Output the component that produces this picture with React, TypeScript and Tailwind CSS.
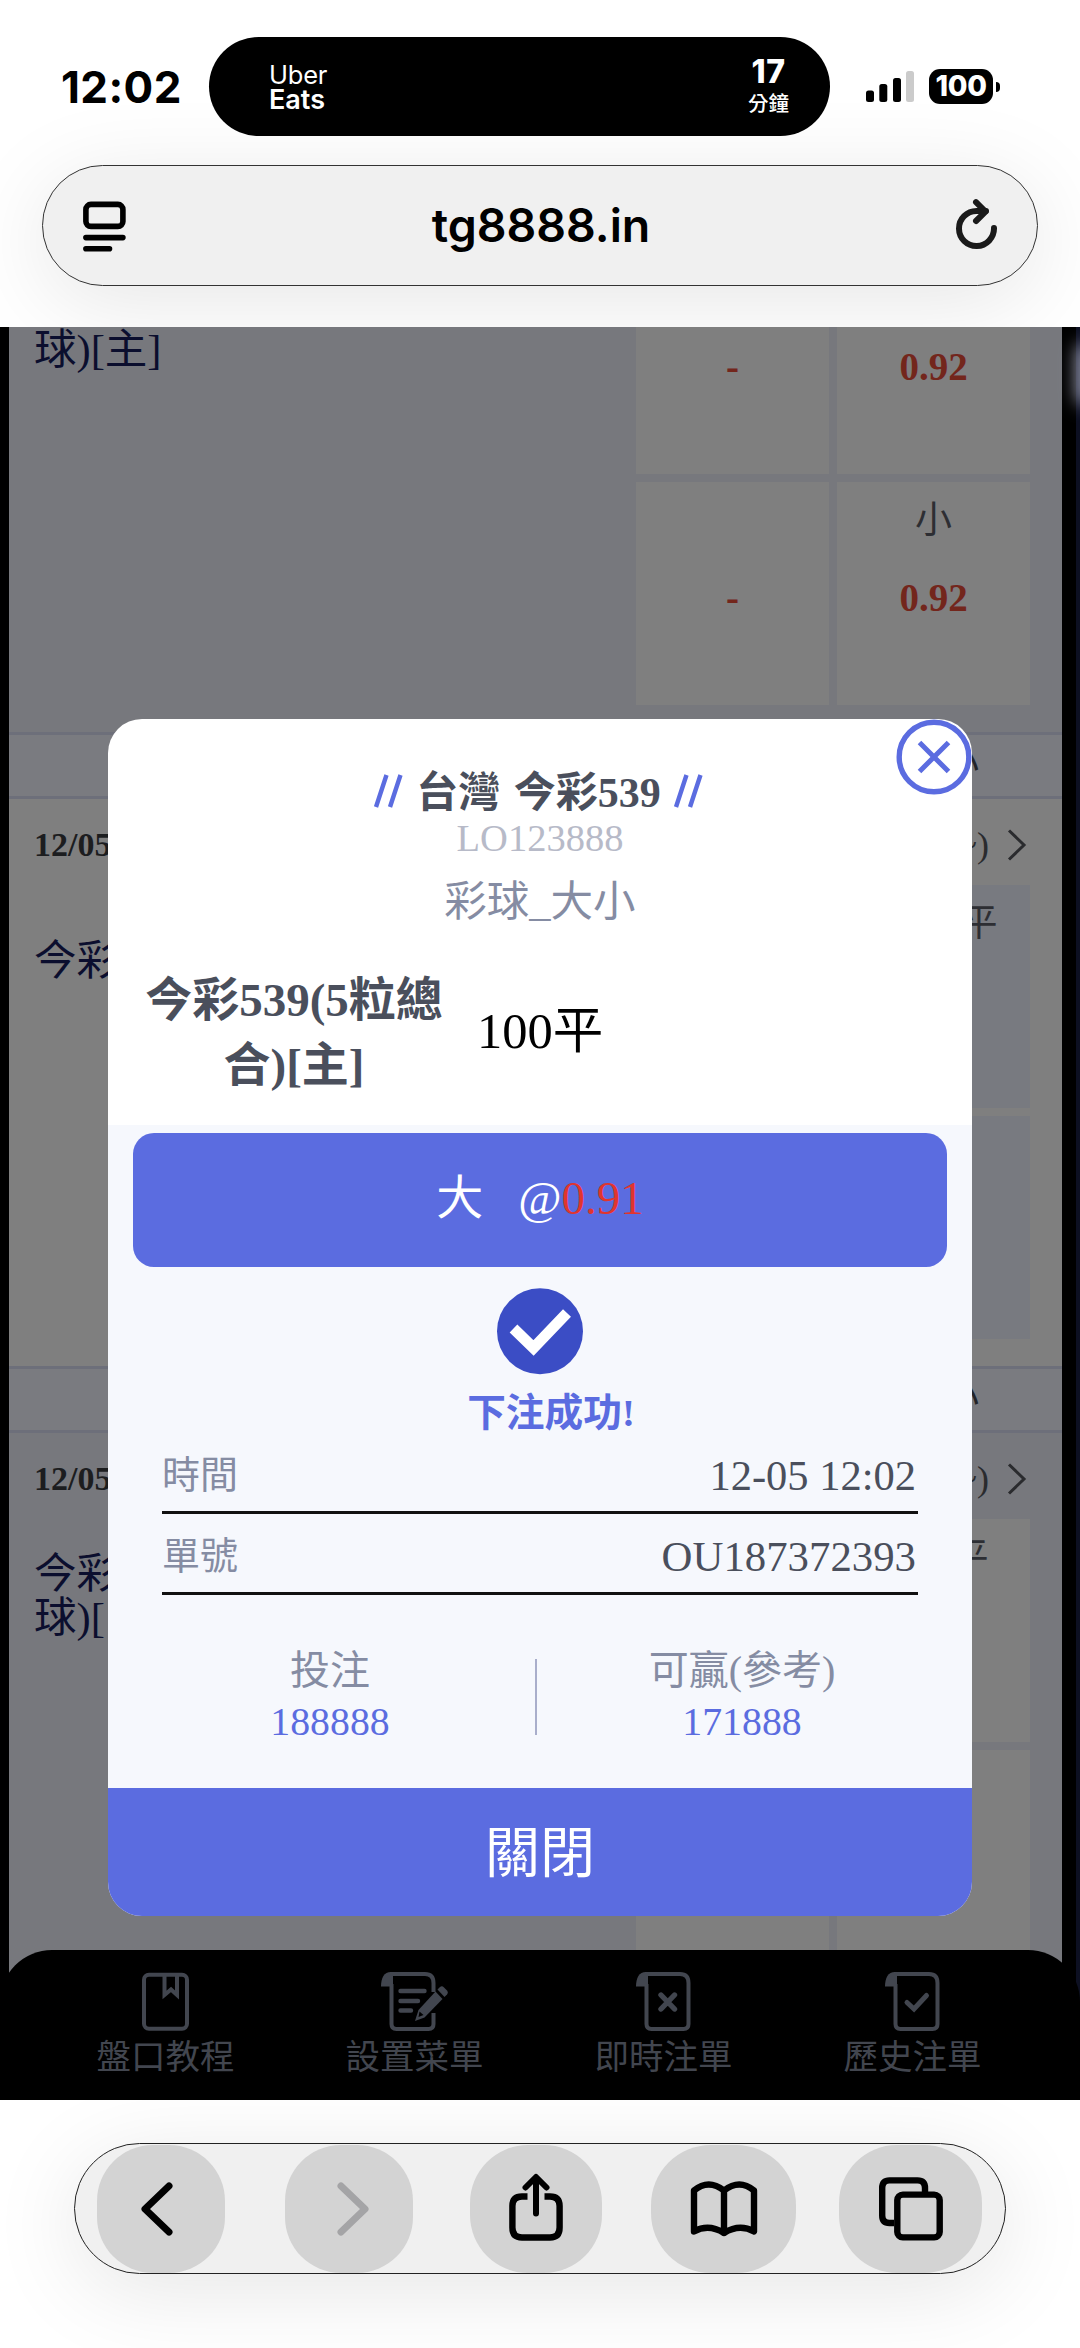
import React from "react";
import clsx from "clsx";

const StatusBar: React.FC = () => (
  <div className="flex items-center h-[99px] mt-[37px] font-['Inter','Noto_Sans_CJK_TC',sans-serif]">
    <span className="w-[148px] ml-[61px] text-[44px] leading-none font-bold tracking-[0.4px] text-black">12:02</span>

    <div className="flex items-center justify-between w-[621px] h-[99px] rounded-[50px] bg-black text-white pl-[60px] pr-[41px]">
      <div className="flex flex-col leading-[25px] pt-px">
        <span className="text-[25.5px] tracking-[-0.2px]">Uber</span>
        <span className="text-[27px] font-semibold">Eats</span>
      </div>
      <div className="flex flex-col items-center pb-px">
        <span className="text-[32px] leading-[36px] font-extrabold tracking-[0.5px]">17</span>
        <span className="text-[20.5px] leading-[28px] font-medium">分鐘</span>
      </div>
    </div>

    <svg className="ml-[36px]" width="48" height="32" viewBox="0 0 48 32">
      <rect x="0" y="19.5" width="8" height="11.5" rx="2.5" />
      <rect x="13.3" y="13" width="8" height="18" rx="2.5" />
      <rect x="27" y="7" width="8" height="24" rx="2.5" />
      <rect x="40" y="0" width="8" height="31" rx="2.5" fill="#cbcbcb" />
    </svg>
    <div className="flex items-center ml-[15px]">
      <div className="flex items-center justify-center w-[64px] h-[35px] rounded-[11px] bg-black text-white text-[28.5px] leading-none font-extrabold tracking-[-0.3px]">
        100
      </div>
      <div className="w-[4px] h-[10px] ml-[3px] rounded-r-full bg-black" />
    </div>
  </div>
);

const AddressBar: React.FC = () => (
  <div className="flex items-center justify-between h-[121px] mt-[29px] mx-[42px] pl-[40px] pr-[39px] rounded-full border-[1.5px] border-[#333] bg-[#f0f0f0] shadow-[0_16px_90px_rgba(0,0,0,0.1)]">
    <svg width="43" height="52" viewBox="0 0 43 52" fill="none" stroke="#000" strokeWidth="5.6" strokeLinecap="round">
      <rect x="2.9" y="4.4" width="37" height="22" rx="5" />
      <path d="M2.9 37.6H39.9M2.9 48.8H26.5" />
    </svg>
    <span className="text-[46.5px] leading-none font-semibold text-black font-['Inter',sans-serif] pb-px">
      tg8888.in
    </span>
    <svg
      className="mb-[3px]"
      width="42"
      height="52"
      viewBox="0 0 42 52"
      fill="none"
      stroke="#1a1a1a"
      strokeWidth="6"
      strokeLinecap="round"
      strokeLinejoin="round"
    >
      <path d="M38 30A17.5 17.5 0 1 1 20.5 13H30" />
      <path d="M20 4.2L29.5 13.6L20 23" />
    </svg>
  </div>
);

interface OddsCellProps {
  label?: string;
  odds?: string;
  tall?: boolean;
  className?: string;
}

const OddsCell: React.FC<OddsCellProps> = ({ label, odds, tall = true, className }) => (
  <div className={clsx("flex flex-col items-center w-[193px]", tall ? "h-[223px] pt-[17px]" : "h-[147px] pt-[18px]", className)}>
    {tall && <span className="h-[44px] mb-[33px] text-[37px] leading-[44px] text-[#2d2e33]">{label}</span>}
    <span className="text-[39px] leading-[44px] font-bold text-[#73261c]">{odds}</span>
  </div>
);

const Band: React.FC = () => (
  <div className="flex justify-end items-center h-[67px] border-y-[3px] border-[#6d6f7a] bg-[#7a7b80] pr-[83px] pb-[5px]">
    <span className="text-[36px] leading-none text-[#232428]">小</span>
  </div>
);

const MatchHeader: React.FC = () => (
  <div className="flex items-center justify-between h-[86px] pl-[25px] pr-[35px] pt-[5px]">
    <span className="text-[34px] leading-none font-bold text-[#1c1d1f]">12/05</span>
    <div className="flex items-center text-[#2a2b2e]">
      <span className="text-[36px] leading-none">~)</span>
      <svg className="ml-[18px]" width="20" height="32" viewBox="0 0 20 32" fill="none" stroke="currentColor" strokeWidth="3">
        <path d="M2 1.5L17 16L2 30.5" />
      </svg>
    </div>
  </div>
);

const OddsPage: React.FC = () => (
  <div className="w-[1053px] h-full bg-[#77787d]">
    <div className="flex h-[405px] pl-[25px] pr-[32px] justify-between">
      <p className="text-[42.5px] leading-[46px] text-[#0b0e2e]">球)[主]</p>
      <div className="grid grid-cols-[193px_193px] gap-[8px] content-start">
        <OddsCell tall={false} odds="-" className="bg-[#7f7f7f]" />
        <OddsCell tall={false} odds="0.92" className="bg-[#7f7f7f]" />
        <OddsCell odds="-" className="bg-[#7f7f7f]" />
        <OddsCell label="小" odds="0.92" className="bg-[#7f7f7f]" />
      </div>
    </div>
    <Band />

    <div className="h-[567px] bg-[#7f7f7f]">
      <MatchHeader />
      <div className="flex justify-between pl-[25px] pr-[32px]">
        <p className="flex items-center h-[151px] text-[42.5px] leading-[44px] text-[#0b0e2e]">今彩</p>
        <div className="grid grid-cols-[193px_193px] gap-[8px]">
          <OddsCell className="bg-[#787a80]" />
          <OddsCell label="平" className="bg-[#787a80] pl-[91px]" />
          <OddsCell className="bg-[#787a80]" />
          <OddsCell className="bg-[#787a80]" />
        </div>
      </div>
    </div>
    <Band />

    <MatchHeader />
    <div className="flex justify-between pl-[25px] pr-[32px]">
      <p className="h-[152px] pt-[33px] text-[42.5px] leading-[44px] text-[#0b0e2e]">
        今彩
        <br />
        球)[
      </p>
      <div className="grid grid-cols-[193px_193px] gap-[8px]">
        <OddsCell className="bg-[#7f7f7f]" />
        <OddsCell label="平" className="bg-[#7f7f7f] pl-[73px]" />
        <OddsCell className="bg-[#7f7f7f]" />
        <OddsCell className="bg-[#7f7f7f]" />
      </div>
    </div>
  </div>
);

const Slashes: React.FC = () => (
  <svg className="mb-[6px]" width="31" height="34" viewBox="0 0 31 34" fill="none" stroke="#5b6ce0" strokeWidth="4.4">
    <path d="M3 33L13.5 1M17 33L27.5 1" />
  </svg>
);

const BetDialog: React.FC = () => (
  <div className="absolute left-[108px] top-[392px] w-[864px] h-[1197px] rounded-[34px] bg-white overflow-hidden">
    <button className="absolute right-0 top-0 w-[76px] h-[76px]">
      <svg width="76" height="76" viewBox="0 0 76 76" fill="none" stroke="#5b6ce0" strokeWidth="5.4">
        <circle cx="38" cy="38" r="34.8" fill="#fff" />
        <path d="M23.5 23.5L52.5 52.5M52.5 23.5L23.5 52.5" strokeWidth="5" />
      </svg>
    </button>

    <div className="flex flex-col items-center h-[406px] pt-[50px]">
      <div className="flex items-center gap-[12px] h-[49px] pr-[3px]">
        <Slashes />
        <h2 className="text-[42px] leading-[49px] font-bold text-[#4a4f5c] [word-spacing:3px]">台灣 今彩539</h2>
        <Slashes />
      </div>
      <p className="text-[38.5px] leading-[40px] text-[#b7bac8]">LO123888</p>
      <p className="mt-[19px] text-[42.5px] leading-[50px] text-[#858ca3]">彩球_大小</p>
      <div className="flex items-center w-full mt-[41px] pl-[35px]">
        <p className="w-[302px] text-center text-[47px] leading-[65px] font-bold text-[#4a4f5c]">
          今彩539(5粒總
          <br />
          合)[主]
        </p>
        <p className="ml-[32px] -mt-[4px] text-[50.5px] leading-[60px] text-black">100平</p>
      </div>
    </div>

    <div className="flex flex-col h-[663px] bg-[#f6f8fd] pt-[8px]">
      <div className="flex items-center justify-center h-[134px] mx-[25px] pb-[4px] rounded-[21px] bg-[#5b6ce0] text-[47px] leading-[60px] text-white">
        <span>大</span>
        <span className="ml-[35px]">@</span>
        <span className="text-[#e0352e]">0.91</span>
      </div>

      <svg className="mt-[21px] mx-auto" width="86" height="87" viewBox="0 0 86 87">
        <circle cx="43" cy="43.3" r="43" fill="#3b4dc5" />
        <path d="M16.5 40.5L36.5 60L70 25" fill="none" stroke="#fff" strokeWidth="11" />
      </svg>
      <p className="mt-[16px] pl-[22px] text-center text-[38.7px] leading-[44px] font-bold text-[#5b6ce0]">下注成功!</p>

      <div className="mx-[54px]">
        <div className="flex items-center justify-between h-[79px] pt-[4px] pr-[2px] border-b-[3px] border-[#111]">
          <span className="text-[38px] leading-none text-[#858ca3]">時間</span>
          <span className="pt-[3px] text-[42.5px] leading-none text-[#4a4f5c]">12-05 12:02</span>
        </div>
        <div className="flex items-center justify-between h-[81px] pt-[5px] pr-[2px] border-b-[3px] border-[#111]">
          <span className="text-[38px] leading-none text-[#858ca3]">單號</span>
          <span className="pt-[3px] text-[42.8px] leading-none text-[#4a4f5c]">OU187372393</span>
        </div>
      </div>

      <div className="grid grid-cols-[410px_2px_410px] mt-[50px] ml-[17px] text-center">
        <div>
          <p className="pt-px text-[40px] leading-[50px] text-[#858ca3]">投注</p>
          <p className="text-[39.8px] leading-[52px] text-[#5b6ce0]">188888</p>
        </div>
        <div className="h-[76px] mt-[14px] bg-[#a9aecb]" />
        <div>
          <p className="pt-px text-[40px] leading-[50px] text-[#858ca3]">可贏(參考)</p>
          <p className="text-[39.8px] leading-[52px] text-[#5b6ce0]">171888</p>
        </div>
      </div>
    </div>

    <button className="flex items-center justify-center w-full h-[128px] pt-[3px] bg-[#5b6ce0] text-[55px] leading-none text-white">
      關閉
    </button>
  </div>
);

// sheet with a curled top-left corner, shared by three of the tabs
const Sheet: React.FC<{ open?: boolean }> = ({ open }) => (
  <>
    <path d="M0 14.5C0 6 3 0 10 0L12 4V14.5Z" fill="currentColor" stroke="none" />
    <path
      d={
        open
          ? "M9 2H44Q52.5 2 52.5 11V20M52.5 41V52Q52.5 57 47.5 57H15.5Q10.5 57 10.5 52V12"
          : "M9 2H44Q52.5 2 52.5 11V52Q52.5 57 47.5 57H15.5Q10.5 57 10.5 52V12"
      }
    />
  </>
);

const tabs = [
  {
    label: "盤口教程",
    width: 47,
    icon: (
      <>
        <rect x="2" y="2.7" width="43" height="54" rx="5" />
        <path d="M22.5 3V23L29 17.5L35 23V3" />
      </>
    ),
  },
  {
    label: "設置菜單",
    width: 67,
    icon: (
      <>
        <Sheet open />
        <path d="M19.5 19H43.5M19.5 29H37M19.5 38.5H30" strokeWidth="4.4" strokeLinecap="round" />
        <path d="M54.5 19.5L61.5 27L43.5 45.5L34 49L37.5 38Z" fill="currentColor" stroke="none" />
        <path d="M56.5 17.5L59 15Q61 13.5 63 15.5L66 18.5Q67.5 20.5 66 22.5L63.5 25Z" fill="currentColor" stroke="none" />
        <path d="M38.5 39.5L42.5 43L37.5 45Z" fill="#000" stroke="none" />
      </>
    ),
  },
  {
    label: "即時注單",
    width: 55,
    icon: (
      <>
        <Sheet />
        <path d="M25 23L38.5 37M38.5 23L25 37" strokeWidth="5.4" strokeLinecap="round" />
      </>
    ),
  },
  {
    label: "歷史注單",
    width: 55,
    icon: (
      <>
        <Sheet />
        <path d="M22 30.5L29 37L41.5 23.5" strokeWidth="5" strokeLinecap="round" />
      </>
    ),
  },
];

const TabBar: React.FC = () => (
  <nav className="absolute left-0 bottom-0 grid grid-cols-4 w-full h-[150px] pl-[41px] pr-[43px] pt-[22px] rounded-t-[52px] bg-black text-[#42464f]">
    {tabs.map((tab) => (
      <div key={tab.label} className="flex flex-col items-center">
        <svg width={tab.width} height="59" viewBox={`0 0 ${tab.width} 59`} fill="none" stroke="currentColor" strokeWidth="4">
          {tab.icon}
        </svg>
        <span className="mt-[6px] text-[34.5px] leading-[40px]">{tab.label}</span>
      </div>
    ))}
  </nav>
);

const BrowserToolbar: React.FC = () => (
  <div className="flex items-start h-[248px] pt-[43px] bg-white overflow-hidden">
    <div className="flex items-center w-[932px] h-[131px] ml-[74px] pl-[22px] rounded-full border-[1.5px] border-[#222] bg-[#f0f0f0] shadow-[0_16px_90px_rgba(0,0,0,0.1)]">
      <div className="flex items-center justify-center w-[128px] h-[128px] rounded-[56px] bg-[#d3d3d3] pr-[8px]">
        <svg width="32" height="54" viewBox="0 0 32 54" fill="none" stroke="#000" strokeWidth="7" strokeLinecap="round" strokeLinejoin="round">
          <path d="M28 4L4 27L28 50" />
        </svg>
      </div>
      <div className="flex items-center justify-center w-[128px] h-[128px] ml-[60px] rounded-[56px] bg-[#d3d3d3] pl-[7px]">
        <svg width="32" height="54" viewBox="0 0 32 54" fill="none" stroke="#a4a4a6" strokeWidth="7" strokeLinecap="round" strokeLinejoin="round">
          <path d="M4 4L28 27L4 50" />
        </svg>
      </div>
      <div className="flex items-center justify-center w-[132px] h-[128px] ml-[57px] rounded-[58px] bg-[#d3d3d3] pb-[3px]">
        <svg width="54" height="68" viewBox="0 0 54 68" fill="none" stroke="#000" strokeWidth="6.4" strokeLinejoin="round">
          <path d="M18.5 23.5H13Q3.4 23.5 3.4 33V54.5Q3.4 64.5 13 64.5H41Q50.6 64.5 50.6 54.5V33Q50.6 23.5 41 23.5H35.5" />
          <path d="M27 5V40.5M16.5 14.5L27 4L37.5 14.5" strokeLinecap="round" strokeWidth="6" />
        </svg>
      </div>
      <div className="flex items-center justify-center w-[145px] h-[128px] ml-[49px] rounded-[60px] bg-[#d3d3d3]">
        <svg width="68" height="58" viewBox="0 0 68 58" fill="none" stroke="#000" strokeWidth="6.4" strokeLinecap="round" strokeLinejoin="round">
          <path d="M34 10.5Q18.5 -1.5 4 10.5V51.5Q18.5 43.5 34 53Q49.5 43.5 64 51.5V10.5Q49.5 -1.5 34 10.5V53" />
        </svg>
      </div>
      <div className="flex items-center justify-center w-[143px] h-[128px] ml-[43px] rounded-[58px] bg-[#d3d3d3]">
        <svg width="64" height="64" viewBox="0 0 64 64" fill="none" stroke="#000" strokeWidth="6.4">
          <path d="M15 46H10.5Q3.2 46 3.2 38.5V11Q3.2 3.4 10.5 3.4H38.5Q46 3.4 46 11V15" />
          <rect x="18.3" y="17.6" width="42.4" height="42.8" rx="5.5" />
        </svg>
      </div>
    </div>
  </div>
);

const App: React.FC = () => (
  <div className="w-[1080px] h-[2348px] overflow-hidden bg-white font-['Liberation_Serif','Noto_Sans_CJK_TC',serif]">
    <header className="flex flex-col h-[327px] overflow-hidden">
      <StatusBar />
      <AddressBar />
    </header>

    <main className="relative flex h-[1773px] bg-black pl-[9px] overflow-hidden">
      <OddsPage />
      <div className="w-[4px] ml-[14px] bg-[#0d1022]" />
      <div className="absolute -right-[10px] top-[20px] w-[10px] h-[54px] rounded-full shadow-[0_0_18px_3px_#a9acc0]" />
      <BetDialog />
      <TabBar />
    </main>

    <BrowserToolbar />
  </div>
);

export default App;
